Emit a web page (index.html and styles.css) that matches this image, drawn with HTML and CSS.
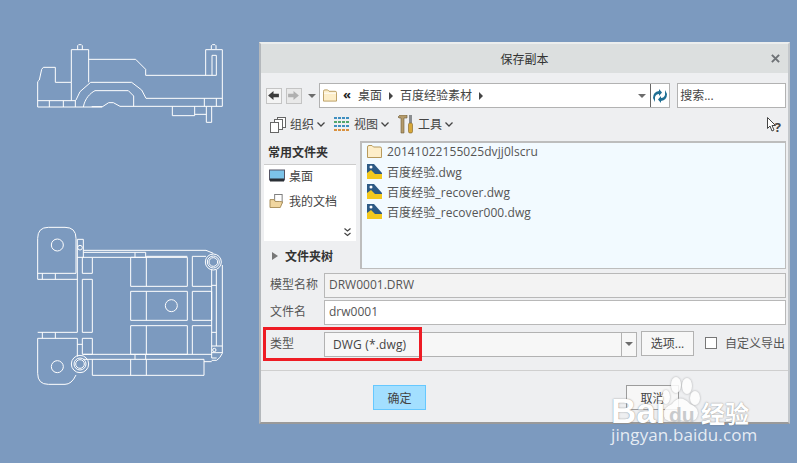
FILE: index.html
```html
<!DOCTYPE html>
<html lang="zh">
<head>
<meta charset="utf-8">
<title>保存副本</title>
<link rel="stylesheet" href="styles.css">
</head>
<body>
<svg class="drawing drawing-top" viewBox="0 0 780 390" fill="none" stroke="#fff" stroke-width="3">
  <path d="M113 231V155L118 150L125 118L130 112H166V157H214V59H266V157"/>
  <path d="M266 88H407L437 118V136H649V76H636V136M617 136V59H667V229H360L340 218H326L306 231H113"/>
  <path d="M228 210L240 185L272 157H395L425 180L438 205H667"/>
  <path d="M250 231C255 205 270 190 285 182H385L401 198V229M275 230H306"/>
  <path d="M113 212H228M148 212V231M190 212V231M226 212V231M214 157V212"/>
  <path d="M517 229V257H584V229M584 253H619M613 205V229M649 205V229M619 229V277H635V229"/>
  <path d="M233 59V47L236 44H244L247 47V59M634 57V47L637 44H645L648 47V57"/>
</svg>
<svg class="drawing drawing-bottom" viewBox="0 0 780 570" fill="none" stroke="#fff" stroke-width="3">
  <path d="M113 208V85Q113 52 145 52H195Q228 52 228 85V190H113M113 208H232M127 190V208M166 190V208"/>
  <circle cx="172" cy="105" r="18"/>
  <path d="M232 88V367M250 88V142M232 88H250M232 142H250M247 142H277V190H247ZM247 208H277V367H247ZM247 385H277V433H247Z"/>
  <circle cx="240" cy="113" r="7"/>
  <path d="M250 121H618L640 130M250 127H437V142H277M405 127V142"/>
  <path d="M392 142H562V229H392ZM439 139V229M439 139H562M392 244H562V331H392ZM439 244V331M392 347H562V433H392ZM439 347V433"/>
  <circle cx="514" cy="287" r="18"/>
  <path d="M618 139H577V229H635M577 244H635V331H577ZM635 347H577V433"/>
  <path d="M250 433H635M250 448H612V496H277V448M405 433V448M437 433V448M392 448V496M439 448V496M612 455H635"/>
  <path d="M113 367H232M113 385H232M127 367V385M166 367V385M232 385V440M232 403H247"/>
  <path d="M113 385V490Q113 523 145 523H195Q215 523 228 495"/>
  <circle cx="172" cy="470" r="18"/>
  <circle cx="640" cy="156" r="24"/><circle cx="640" cy="156" r="18"/><circle cx="640" cy="156" r="13"/>
  <circle cx="240" cy="462" r="26"/><circle cx="240" cy="462" r="18"/><circle cx="240" cy="462" r="13"/>
  <path d="M635 178V444H650M649 180V408M667 165V430Q660 445 650 451H635M635 226H649M635 367H649M635 408H667M635 428H667"/>
  <circle cx="643" cy="420" r="5"/>
</svg>

<main class="dialog">
  <header class="titlebar">
    <h1 class="title">保存副本</h1>
    <svg class="close" viewBox="0 0 10 10"><path d="M1 1L9 9M9 1L1 9" stroke="#6e7276" stroke-width="2.2"/></svg>
  </header>

  <div class="addressrow">
    <button class="navbtn" aria-label="后退"><svg viewBox="0 0 12 10"><path d="M0 5L6 0V3H12V7H6V10Z" fill="#3c3c3c"/></svg></button>
    <button class="navbtn navbtn-off" aria-label="前进"><svg viewBox="0 0 12 10"><path d="M12 5L6 0V3H0V7H6V10Z" fill="#b0b0b0"/></svg></button>
    <span class="tri tri-nav"></span>
    <div class="address">
      <svg class="ico-folder" viewBox="0 0 15 13"><path d="M.5 12.5V2Q.5 .5 2 .5H5L6.500 2H13Q14.500 2 14.500 3.500V12.500Z" fill="#fdeec9" stroke="#b79a5c"/><path d="M1 4H14" stroke="#fff"/></svg>
      <span class="crumb-mark">«</span>
      <span class="crumb">桌面</span><span class="crumb-arrow"></span>
      <span class="crumb">百度经验素材</span><span class="crumb-arrow"></span>
      <span class="spacer"></span>
      <span class="tri tri-addr"></span>
      <span class="refresh"><svg viewBox="0 0 16 14"><path d="M1 9Q1 3 7 2V0L10 3.500L7 7V5Q4 5 3 8V13Z" fill="#1f6f94"/><path d="M15 5Q15 11 9 12V14L6 10.500L9 7V9Q12 9 13 6V1Z" fill="#1f6f94"/></svg></span>
    </div>
    <div class="search">搜索...</div>
  </div>

  <div class="toolrow">
    <svg class="ico-org" viewBox="0 0 16 16" fill="#fff" stroke="#666"><rect x="7.500" y=".5" width="8" height="10"/><rect x="4.500" y="2.500" width="8" height="10"/><rect x=".5" y="5.500" width="8" height="10"/></svg>
    <span class="tool">组织</span><svg class="chev" viewBox="0 0 8 5"><path d="M.5 .5L4 4L7.500 .5" fill="none" stroke="#444" stroke-width="1.300"/></svg>
    <svg class="ico-view" viewBox="0 0 15 15">
      <path d="M0 1H3M4 1H7M8 1H11M12 1H15" stroke="#3f8fc0" stroke-width="2" fill="none"/>
      <path d="M0 5H3M4 5H7M8 5H11M12 5H15" stroke="#53a66c" stroke-width="2" fill="none"/>
      <path d="M0 9H3M4 9H7M8 9H11M12 9H15" stroke="#3f8fc0" stroke-width="2" fill="none"/>
      <path d="M0 13H3M4 13H7M8 13H11M12 13H15" stroke="#d9913f" stroke-width="2" fill="none"/>
    </svg>
    <span class="tool">视图</span><svg class="chev" viewBox="0 0 8 5"><path d="M.5 .5L4 4L7.500 .5" fill="none" stroke="#444" stroke-width="1.300"/></svg>
    <svg class="ico-tools" viewBox="0 0 16 19"><path d="M0 2L2 0H9V3H6V18H3V3H1Z" fill="#b49a6a" stroke="#6b5a3a" stroke-width=".6"/><rect x="11" y="0" width="3" height="8" fill="#8a8d90"/><rect x="10.500" y="8" width="4" height="10" rx="1.500" fill="#d8a83a" stroke="#7a5c20" stroke-width=".6"/></svg>
    <span class="tool">工具</span><svg class="chev" viewBox="0 0 8 5"><path d="M.5 .5L4 4L7.500 .5" fill="none" stroke="#444" stroke-width="1.300"/></svg>
    <span class="spacer"></span>
    <span class="help"><svg viewBox="0 0 9 15"><path d="M.5 .5V11.500L3 9L5 14L7 13L5 8.500H8.500Z" fill="#fff" stroke="#444"/></svg><b>?</b></span>
  </div>

  <div class="browser">
    <aside class="side">
      <h2 class="side-title">常用文件夹</h2>
      <ul class="places">
        <li class="place">
          <svg class="ico-place" viewBox="0 0 16 13"><rect x=".5" y=".5" width="15" height="10" fill="#7cc3e8" stroke="#556"/><rect x="1" y="9" width="14" height="3" fill="#2a2f35"/></svg>桌面
        </li>
        <li class="place">
          <svg class="ico-place" viewBox="0 0 16 15"><rect x="5.500" y=".5" width="8" height="9" fill="#fff" stroke="#777"/><path d="M.5 14.500V6H5L6 8H11L14 8.500L11.500 14.500Z" fill="#f0d6a0" stroke="#a58a55"/></svg>我的文档
        </li>
      </ul>
      <svg class="more" viewBox="0 0 7 9"><path d="M.5 .5L3.500 3L6.500 .5M.5 5L3.500 7.500L6.500 5" fill="none" stroke="#444" stroke-width="1.200"/></svg>
      <div class="tree"><span class="tree-tri"></span>文件夹树</div>
    </aside>
    <section class="files">
      <div class="file"><svg class="ico-file" viewBox="0 0 15 13"><path d="M.5 12.500V2Q.5 .5 2 .5H5L6.500 2H13Q14.500 2 14.500 3.500V12.500Z" fill="#fdeec9" stroke="#b79a5c"/></svg>20141022155025dvjj0lscru</div>
      <div class="file"><svg class="ico-file" viewBox="0 0 15 15"><path d="M0 15V1H6L15 10V15Z" fill="#f2c81e"/><path d="M0 9V0H7L15 9V10H8L4 6L0 9Z" fill="#2d5a85"/><circle cx="4" cy="3" r="1.500" fill="#fff"/></svg>百度经验.dwg</div>
      <div class="file"><svg class="ico-file" viewBox="0 0 15 15"><path d="M0 15V1H6L15 10V15Z" fill="#f2c81e"/><path d="M0 9V0H7L15 9V10H8L4 6L0 9Z" fill="#2d5a85"/><circle cx="4" cy="3" r="1.500" fill="#fff"/></svg>百度经验_recover.dwg</div>
      <div class="file"><svg class="ico-file" viewBox="0 0 15 15"><path d="M0 15V1H6L15 10V15Z" fill="#f2c81e"/><path d="M0 9V0H7L15 9V10H8L4 6L0 9Z" fill="#2d5a85"/><circle cx="4" cy="3" r="1.500" fill="#fff"/></svg>百度经验_recover000.dwg</div>
    </section>
  </div>

  <div class="form">
    <label class="label">模型名称</label>
    <div class="field field-off">DRW0001.DRW</div>
    <label class="label">文件名</label>
    <div class="field">drw0001</div>
    <label class="label label-type">类型</label>
    <div class="typeline">
      <div class="select"><span class="select-value">DWG (*.dwg)</span><span class="select-btn"><span class="tri"></span></span></div>
      <button class="btn btn-options">选项...</button>
      <span class="check"></span>
      <span class="check-label">自定义导出</span>
    </div>
  </div>

  <footer class="footer">
    <button class="btn btn-ok">确定</button>
    <button class="btn btn-cancel">取消</button>
  </footer>
</main>

<div class="highlight"></div>

<div class="watermark">
  <svg class="paw" viewBox="0 0 50 50" fill="#fff">
    <ellipse cx="16" cy="10" rx="5" ry="8"/><ellipse cx="27" cy="11" rx="5" ry="8"/><ellipse cx="35" cy="23" rx="5" ry="7"/><ellipse cx="6" cy="22" rx="4" ry="7"/>
    <path d="M5 44Q0 34 12 29Q20 18 30 29Q42 34 36 44Q30 49 20 45Q12 49 5 44Z"/>
  </svg>
  <span class="wm-bai">Bai</span>
  <span class="wm-du">du</span>
  <span class="wm-jy">经验</span>
  <span class="wm-url">jingyan.baidu.com</span>
</div>
</body>
</html>
```
FILE: styles.css
```css
* { box-sizing: border-box; }
html, body { margin: 0; padding: 0; }
body {
  width: 797px; height: 463px; position: relative; overflow: hidden;
  background: #7c9abf;
  font: 12px "Open Sans", "Noto Sans CJK SC", sans-serif;
  color: #444;
}
button { font: inherit; color: inherit; padding: 0; }
.drawing { position: absolute; left: 0; display: block; width: 260px; }
.drawing-top { top: 30px; height: 130px; }
.drawing-bottom { top: 210px; height: 190px; }

.dialog {
  position: absolute; left: 259px; top: 42px; width: 531px; height: 382px;
  background: #eeeff1;
  border: 2px solid #e8e9ea; border-left-color: #b4b8bc; border-bottom-color: #9a9a9a; border-right-color: #c4c8cc; border-top-color: #eceeee;
  display: flex; flex-direction: column;
}
.titlebar { height: 29px; background: #dcdfdf; display: flex; align-items: center; justify-content: center; position: relative; flex: none; }
.title { margin: 0; font-size: 12px; font-weight: 400; color: #333; }
.close { position: absolute; right: 8px; top: 10px; width: 9px; height: 9px; }

.addressrow { display: flex; align-items: center; height: 25px; margin: 10px 2px 0 5px; flex: none; }
.navbtn { width: 16px; height: 16px; border: 1px solid #c4c4c4; background: #f4f4f4; display: flex; align-items: center; justify-content: center; margin-right: 4px; }
.navbtn svg { width: 11px; height: 9px; }
.navbtn-off { background: #e9e9e9; }
.tri { display: inline-block; width: 0; height: 0; border: 4px solid transparent; border-top: 4px solid #6c6c6c; border-bottom: 0; }
.tri-nav { margin: 0 3px 0 2px; }
.address { width: 352px; height: 25px; border: 1px solid #b2b2b2; background: #fff; display: flex; align-items: center; margin-right: 7px; }
.ico-folder { width: 14px; height: 13px; margin: 0 6px 0 3px; flex: none; }
.crumb-mark { font-size: 13px; font-weight: 700; color: #222; width: 15px; line-height: 12px; margin-bottom: 3px; }
.crumb { line-height: 16px; color: #444; }
.crumb-arrow { width: 0; height: 0; border: 4px solid transparent; border-left: 4px solid #444; border-right: 0; margin: 0 7px; }
.spacer { flex: 1; }
.tri-addr { margin-right: 4px; }
.refresh { width: 19px; height: 23px; border-left: 1px solid #666; display: flex; align-items: center; justify-content: center; }
.refresh svg { width: 16px; height: 14px; }
.search { width: 109px; height: 25px; border: 1px solid #b2b2b2; background: #fff; padding-left: 2px; line-height: 23px; }

.toolrow { display: flex; align-items: center; height: 21px; margin: 6px 7px 0 9px; flex: none; }
.ico-org { width: 16px; height: 16px; margin-right: 4px; }
.tool { line-height: 16px; margin-right: 3px; }
.chev { width: 8px; height: 5px; margin-right: 9px; }
.ico-view { width: 15px; height: 15px; margin-right: 5px; }
.ico-tools { width: 16px; height: 19px; margin-right: 4px; }
.help { display: flex; align-items: center; }
.help svg { width: 9px; height: 15px; }
.help b { font: 700 13px "Open Sans", sans-serif; margin: 4px 0 0 -1px; }

.browser { display: flex; height: 128px; margin: 6px 2px 0 3px; flex: none; }
.side { width: 92px; margin-right: 4px; position: relative; }
.side-title { margin: 0; height: 24px; font-size: 12px; font-weight: 700; line-height: 24px; padding-left: 4px; color: #333; border-bottom: 1px solid #ccc; }
.places { list-style: none; margin: 0; padding: 0; height: 76px; background: #fff; }
.place { display: flex; align-items: center; height: 25px; padding: 0 0 3px 5px; color: #444; }
.ico-place { width: 16px; height: 14px; margin-right: 4px; }
.more { position: absolute; right: 5px; top: 87px; width: 7px; height: 9px; }
.tree { display: flex; align-items: center; height: 28px; font-weight: 700; color: #333; padding: 1px 0 0 8px; }
.tree-tri { width: 0; height: 0; border: 4px solid transparent; border-left: 6px solid #777; border-right: 0; margin-right: 7px; }
.files { flex: 1; border: 1px solid #bdbdbd; border-width: 2px 1px 1px 2px; background: #f2faff; padding: 0 0 0 5px; }
.file { display: flex; align-items: center; height: 20px; padding-bottom: 3px; font-size: 12px; letter-spacing: .08px; color: #555; }
.ico-file { width: 15px; height: 15px; margin-right: 5px; flex: none; }

.form { display: grid; grid-template-columns: 63px 462px; grid-template-rows: 25px 25px 26px; row-gap: 2px; margin: 4px 0 0 0; flex: none; }
.label { padding-left: 9px; line-height: 24px; color: #555; }
.label-type { padding-top: 5px; }
.field { border: 1px solid #b8b8b8; background: #fff; padding-left: 4px; line-height: 22px; color: #555; height: 25px; font-size: 12px; }
.field-off { background: #f3f3f3; }
.typeline { display: flex; align-items: center; padding-top: 4px; height: 30px; }
.select { width: 313px; height: 25px; border: 1px solid #b2b2b2; background: #f7f7f7; display: flex; align-items: center; margin-right: 4px; }
.select-value { flex: 1; padding-left: 8px; letter-spacing: .15px; }
.select-btn { width: 15px; height: 23px; border-left: 1px solid #b2b2b2; display: flex; align-items: center; justify-content: center; }
.btn { border: 1px solid #b2b2b2; background: #f7f7f7; }
.btn-options { width: 53px; height: 25px; margin: -2px 11px 0 0; }
.check { width: 12px; height: 12px; border: 1px solid #777; background: #fff; margin: -2px 8px 0 0; }
.check-label { margin-top: -2px; white-space: nowrap; color: #555; }

.footer { display: flex; justify-content: space-between; margin: 17px 0 0 0; padding: 14px 109px 0 112px; border-top: 1px solid #cfcfcf; flex: none; }
.btn-ok { width: 53px; height: 25px; background: #a3dfff; border: 1px solid #66c8ff; }
.btn-cancel { width: 53px; height: 25px; border-color: #9c9c9c; }

.highlight { position: absolute; left: 263px; top: 327px; width: 159px; height: 34px; border: 3px solid #ee1c25; }

.watermark { position: absolute; left: 600px; top: 375px; width: 170px; height: 80px; color: #fff; }
.paw { position: absolute; left: 60px; top: 0; width: 50px; height: 50px; opacity: .85; filter: drop-shadow(0 0 1px rgba(110,110,110,.6)); }
.wm-bai { position: absolute; left: 11px; top: 23px; font: 700 35px/26px "Liberation Sans", sans-serif; text-shadow: 0 0 1.5px rgba(90,90,90,.8); }
.wm-du { position: absolute; left: 69px; top: 30px; font: 700 21px/20px "Liberation Sans", sans-serif; color: #c8cacc; }
.wm-jy { position: absolute; left: 101px; top: 26px; font: 700 24px/24px "Noto Sans CJK SC", sans-serif; text-shadow: 0 0 1.5px rgba(90,90,90,.8); }
.wm-url { position: absolute; left: 11px; top: 50px; font: 400 17px/20px "Open Sans", sans-serif; letter-spacing: .1px; color: rgba(255,255,255,.82); white-space: nowrap; }
```
